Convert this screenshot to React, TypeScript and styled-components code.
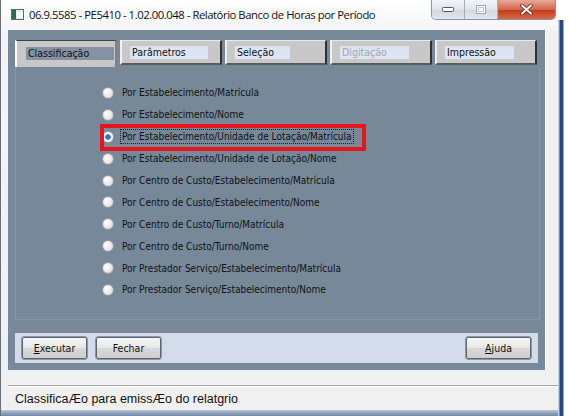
import styled, { createGlobalStyle } from 'styled-components'

const GlobalStyle = createGlobalStyle`
  html, body {
    margin: 0;
    padding: 0;
    background: #ffffff;
  }
  * {
    box-sizing: border-box;
  }
`

const tabs = [
  { label: 'Classificação', width: 88, active: true },
  { label: 'Parâmetros', width: 78 },
  { label: 'Seleção', width: 55 },
  { label: 'Digitação', width: 69, disabled: true },
  { label: 'Impressão', width: 69 },
]

const options = [
  'Por Estabelecimento/Matrícula',
  'Por Estabelecimento/Nome',
  'Por Estabelecimento/Unidade de Lotação/Matrícula',
  'Por Estabelecimento/Unidade de Lotação/Nome',
  'Por Centro de Custo/Estabelecimento/Matrícula',
  'Por Centro de Custo/Estabelecimento/Nome',
  'Por Centro de Custo/Turno/Matrícula',
  'Por Centro de Custo/Turno/Nome',
  'Por Prestador Serviço/Estabelecimento/Matrícula',
  'Por Prestador Serviço/Estabelecimento/Nome',
]

const SELECTED = 2

const App = () => {
  return (
    <>
      <GlobalStyle />
      <Screen>
        <Window>
          <TitleBar>
            <AppIcon>
              <svg width="13" height="11" viewBox="0 0 13 11">
                <rect x="0.5" y="0.5" width="12" height="10" fill="#e8ecef" stroke="#5a6a70" />
                <rect x="1" y="1" width="4" height="9" fill="#2f6b4f" />
                <rect x="6" y="3" width="6" height="6" fill="#ffffff" />
              </svg>
            </AppIcon>
            <Title>06.9.5585 - PE5410 - 1.02.00.048 - Relatório Banco de Horas por Período</Title>
            <Controls>
              <CtrlButton>
                <svg width="12" height="6" viewBox="0 0 12 6">
                  <rect x="0.5" y="0.5" width="11" height="4" rx="1" fill="#fff" stroke="#555" />
                </svg>
              </CtrlButton>
              <CtrlButton>
                <svg width="10" height="9" viewBox="0 0 10 9">
                  <rect x="0.5" y="0.5" width="9" height="8" fill="#fff" stroke="#9aa" />
                  <rect x="2.5" y="2.5" width="5" height="4" fill="none" stroke="#bcc" />
                </svg>
              </CtrlButton>
              <CloseButton>
                <svg width="13" height="11" viewBox="0 0 13 11">
                  <path d="M2 1.5 L11 9.5 M11 1.5 L2 9.5" stroke="#5a1a10" strokeWidth="3.6" strokeLinecap="round" />
                  <path d="M2 1.5 L11 9.5 M11 1.5 L2 9.5" stroke="#ffffff" strokeWidth="2.2" strokeLinecap="round" />
                </svg>
              </CloseButton>
            </Controls>
          </TitleBar>

          <Client>
            <Workspace>
              <TabStrip>
                {tabs.map((t) => (
                  <Tab key={t.label} $active={t.active}>
                    <TabLabel $active={t.active} $disabled={t.disabled} style={{ width: t.width }}>
                      {t.label}
                    </TabLabel>
                  </Tab>
                ))}
              </TabStrip>
              <TabPanel>
                <RadioList>
                  {options.map((o, i) => (
                    <RadioRow key={o} $highlight={i === SELECTED}>
                      <Radio $checked={i === SELECTED} />
                      <RadioText $focus={i === SELECTED}>{o}</RadioText>
                    </RadioRow>
                  ))}
                </RadioList>
              </TabPanel>
              <ButtonBar>
                <Button>
                  <u>E</u>xecutar
                </Button>
                <Button>Fechar</Button>
                <Spacer />
                <Button>
                  <u>A</u>juda
                </Button>
              </ButtonBar>
            </Workspace>
            <SideStrip />
          </Client>

          <Gap />
          <StatusBar>ClassificaÆo para emissÆo do relatgrio</StatusBar>
        </Window>
        <BackEdge />
      </Screen>
    </>
  )
}

const Screen = styled.div`
  display: flex;
  width: 569px;
  height: 416px;
  overflow: hidden;
`

const Window = styled.div`
  display: flex;
  flex-direction: column;
  width: 558px;
  height: 416px;
  background: linear-gradient(#ffffff, #f3f5f8 30px, #eef1f4);
  border-left: 1px solid #6a6e74;
  padding: 0 0 6px 7px;
  position: relative;
  font-family: 'DejaVu Sans Condensed', 'Liberation Sans', sans-serif;
  &::after {
    content: '';
    position: absolute;
    left: 0;
    right: 0;
    bottom: 0;
    height: 6px;
    background: linear-gradient(#b8c4d4, #6f84a4);
  }
`

const BackEdge = styled.div`
  width: 11px;
  height: 416px;
  background: linear-gradient(90deg, #c9d2de 0, #c9d2de 1px, #21427c 2px, #2b4e8c 5px, #ffffff 6px);
  margin-top: 20px;
`

const TitleBar = styled.div`
  display: flex;
  align-items: flex-start;
  height: 30px;
`

const AppIcon = styled.div`
  display: flex;
  margin: 9px 0 0 3px;
`

const Title = styled.div`
  margin: 7px 0 0 5px;
  font-family: 'Open Sans', 'Liberation Sans', sans-serif;
  font-size: 11.3px;
  letter-spacing: -0.45px;
  color: #111;
  white-space: nowrap;
`

const Controls = styled.div`
  display: flex;
  margin: 0 2px 0 auto;
  height: 20px;
  border: 1px solid #8a94a2;
  border-top: none;
  border-radius: 0 0 5px 5px;
  overflow: hidden;
`

const CtrlButton = styled.div`
  display: flex;
  align-items: center;
  justify-content: center;
  width: 33px;
  height: 100%;
  background: linear-gradient(#f4f6f8, #dfe4ea 50%, #cfd6de 51%, #e4e8ee);
  border-right: 1px solid #a4adb8;
`

const CloseButton = styled.div`
  display: flex;
  align-items: center;
  justify-content: center;
  width: 57px;
  height: 100%;
  background: linear-gradient(#e8a89a, #d4664e 50%, #c2381c 51%, #d76a42);
`

const Client = styled.div`
  display: flex;
  height: 340px;
`

const Workspace = styled.div`
  flex: 1;
  display: flex;
  flex-direction: column;
  background: #778899;
  padding: 10px 0 0 7px;
`

const SideStrip = styled.div`
  width: 13px;
  background: #f0f0f0;
  border-left: 1px solid #ffffff;
`

const TabStrip = styled.div`
  display: flex;
  gap: 3px;
  height: 27px;
  align-items: flex-start;
`

const Tab = styled.div<{ $active?: boolean }>`
  display: flex;
  align-items: center;
  width: 102px;
  height: ${({ $active }) => ($active ? '27px' : '25px')};
  padding: ${({ $active }) => ($active ? '0 0 2px 9px' : '0 0 0 8px')};
  background: #c8c8c8;
  border-top: 1px solid ${({ $active }) => ($active ? '#404040' : '#e8e8e8')};
  border-left: 2px solid ${({ $active }) => ($active ? '#ffffff' : '#f0f0f0')};
  border-right: 2px solid ${({ $active }) => ($active ? '#808080' : '#303030')};
  border-bottom: ${({ $active }) => ($active ? 'none' : '2px solid #5a5a5a')};
`

const TabLabel = styled.div<{ $active?: boolean; $disabled?: boolean }>`
  height: 13px;
  padding-left: 2px;
  font-size: 10.5px;
  line-height: 13px;
  background: ${({ $active }) => ($active ? '#8393a3' : '#dde5f5')};
  color: ${({ $disabled }) => ($disabled ? '#a0a4aa' : '#111')};
  white-space: nowrap;
  overflow: hidden;
`

const TabPanel = styled.div`
  width: 525px;
  height: 253px;
  border: 1px solid #8696a6;
  border-top: none;
  padding: 15px 0 0 86px;
`

const RadioList = styled.div`
  display: flex;
  flex-direction: column;
`

/* the red frame is an annotation drawn over the row */
const RadioRow = styled.div<{ $highlight?: boolean }>`
  position: relative;
  display: flex;
  align-items: center;
  gap: 7px;
  height: 21.9px;
  &::before {
    content: '';
    display: ${({ $highlight }) => ($highlight ? 'block' : 'none')};
    position: absolute;
    left: -2px;
    top: -2px;
    bottom: -3px;
    width: 258px;
    border: 4px solid #e8141c;
  }
`

const Radio = styled.span<{ $checked?: boolean }>`
  flex: none;
  width: 12px;
  height: 12px;
  border-radius: 50%;
  border: 1px solid #9a9a9a;
  background: ${({ $checked }) =>
    $checked
      ? 'radial-gradient(circle, #1f6ad0 0, #3a84e0 2.5px, #ffffff 3.2px, #f4f4f4 100%)'
      : 'radial-gradient(circle at 35% 35%, #ffffff 0, #e6e6e6 60%, #c8c8c8 100%)'};
`

const RadioText = styled.span<{ $focus?: boolean }>`
  font-size: 10px;
  color: #111;
  white-space: nowrap;
  padding: 1px 1px;
  outline: ${({ $focus }) => ($focus ? '1px dotted #222' : 'none')};
`

const ButtonBar = styled.div`
  display: flex;
  gap: 9px;
  align-items: center;
  width: 523px;
  height: 30px;
  margin-top: 13px;
  padding: 0 7px;
  background: #d4dcec;
`

const Spacer = styled.div`
  flex: 1;
`

const Button = styled.div`
  display: flex;
  align-items: center;
  justify-content: center;
  width: 65px;
  height: 22px;
  border: 1px solid #5c6670;
  outline: 1px solid #8a98a8;
  border-radius: 2px;
  background: linear-gradient(#f6f6f6, #e8e8e8 50%, #d8d8d8 51%, #cfcfcf);
  font-size: 10.5px;
  color: #111;
  u {
    text-decoration: underline;
  }
`

const Gap = styled.div`
  height: 16px;
  background: #f0f0f0;
  border-bottom: 1px solid #a8a8a8;
`

const StatusBar = styled.div`
  height: 24px;
  padding: 5px 0 0 7px;
  background: #f0f0f0;
  border-top: 1px solid #ffffff;
  font-family: 'Liberation Sans', Arial, sans-serif;
  font-size: 12.5px;
  color: #111;
`

export default App
